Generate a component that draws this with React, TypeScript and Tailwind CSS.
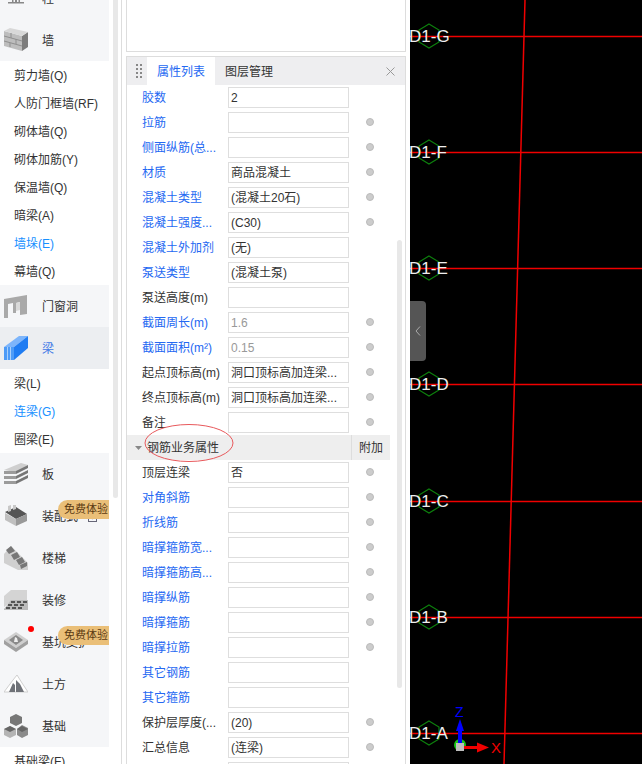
const font = { fontFamily: '"Liberation Sans", "Noto Sans CJK SC", sans-serif' };

type Prop = { label: string; value?: string; blue?: boolean; dot?: boolean; muted?: boolean };

const topProps: Prop[] = [
  { label: "胶数", value: "2", blue: true, dot: false },
  { label: "拉筋", blue: true },
  { label: "侧面纵筋(总...", blue: true },
  { label: "材质", value: "商品混凝土", blue: true },
  { label: "混凝土类型", value: "(混凝土20石)", blue: true },
  { label: "混凝土强度...", value: "(C30)", blue: true },
  { label: "混凝土外加剂", value: "(无)", blue: true, dot: false },
  { label: "泵送类型", value: "(混凝土泵)", blue: true, dot: false },
  { label: "泵送高度(m)", dot: false },
  { label: "截面周长(m)", value: "1.6", blue: true, muted: true },
  { label: "截面面积(m²)", value: "0.15", blue: true, muted: true },
  { label: "起点顶标高(m)", value: "洞口顶标高加连梁..." },
  { label: "终点顶标高(m)", value: "洞口顶标高加连梁..." },
  { label: "备注" },
];

const rebarProps: Prop[] = [
  { label: "顶层连梁", value: "否" },
  { label: "对角斜筋", blue: true },
  { label: "折线筋", blue: true },
  { label: "暗撑箍筋宽...", blue: true },
  { label: "暗撑箍筋高...", blue: true },
  { label: "暗撑纵筋", blue: true },
  { label: "暗撑箍筋", blue: true },
  { label: "暗撑拉筋", blue: true },
  { label: "其它钢筋", blue: true, dot: false },
  { label: "其它箍筋", blue: true, dot: false },
  { label: "保护层厚度(...", value: "(20)" },
  { label: "汇总信息", value: "(连梁)" },
  { label: "", dot: false },
];

const axes = [
  { name: "D1-G", y: 36 },
  { name: "D1-F", y: 152 },
  { name: "D1-E", y: 268 },
  { name: "D1-D", y: 384 },
  { name: "D1-C", y: 501 },
  { name: "D1-B", y: 617 },
  { name: "D1-A", y: 733 },
];

const WallIcon = () => (
  <svg width="24" height="24" viewBox="0 0 24 24">
    <path d="M0 3l18 5v15L0 18z" fill="#bdbdbd" />
    <path d="M18 8l6-4v15l-6 4z" fill="#7c7c7c" />
    <path d="M0 3l6-3 18 4-6 4z" fill="#d8d8d8" />
    <path d="M0 8l18 5M0 13l18 5M7 5v5M12 11v5M6 15v4" stroke="#8f8f8f" fill="none" />
  </svg>
);
const DoorIcon = () => (
  <svg width="24" height="24" viewBox="0 0 24 24">
    <path d="M0 5l23-4v19l-7 1V8l-4 1v10H9V9L4 10v14l-4 0z" fill="#a9a9a9" />
    <path d="M12 9l4-1v8l-4 1z" fill="#d9d9d9" />
  </svg>
);
const BeamIcon = () => (
  <svg width="24" height="24" viewBox="0 0 24 24">
    <path d="M0 11L15 0h9L10 11z" fill="#7db5fb" />
    <path d="M10 11L24 0v12L10 24z" fill="#1f7cf2" />
    <path d="M0 11h10v13H0z" fill="#4d9bf7" />
    <path d="M3.500 11v13M6.500 11v13" stroke="#a9d0fb" />
  </svg>
);
const SlabIcon = () => (
  <svg width="24" height="22" viewBox="0 0 24 22">
    <path d="M0 7L17 0l7 2L11 9z" fill="#cfcfcf" />
    <path d="M0 8h12v3H0zM0 13h12v3H0zM0 18h12v3H0z" fill="#9b9b9b" />
    <path d="M12 8l12-6v3L12 11zM12 13l12-6v3L12 16zM12 18l12-6v3L12 21z" fill="#777" />
  </svg>
);
const PrefabIcon = () => (
  <svg width="24" height="22" viewBox="0 0 24 22">
    <path d="M1 7l11-5 11 7-11 5z" fill="#555" />
    <path d="M1 8v7l11 6v-7z" fill="#c0c0c0" />
    <path d="M12 14v7l11-5V9z" fill="#999" />
    <path d="M4 1l3-1v6L4 7zM9 0l3-1v5L9 5z" fill="#c8c8c8" />
  </svg>
);
const StairIcon = () => (
  <svg width="24" height="24" viewBox="0 0 24 24">
    <path d="M0 8l7-8 17 17v7H14L0 17z" fill="#d0d0d0" />
    <path d="M2 4l5-4 4 5-6 3zM7 9l6-3 3 5-6 3zM12 14l6-3 3 5-6 3zM16 19l7-3v4l-6 3z" fill="#777" />
  </svg>
);
const FinishIcon = () => (
  <svg width="24" height="22" viewBox="0 0 24 22">
    <path d="M0 7l7-6h16v11H8L0 18z" fill="#d4d4d4" />
    <path d="M0 20l7-9h17v10H0z" fill="#bbb" />
    <path d="M7 12h4v2H7zM13 12h4v2h-4zM19 12h4v2h-4zM4 15h4v2H4zM10 15h4v2h-4zM16 15h4v2h-4zM2 18h4v2H2zM8 18h4v2H8zM14 18h4v2h-4z" fill="#555" />
  </svg>
);
const PitIcon = () => (
  <svg width="24" height="20" viewBox="0 0 24 20">
    <path d="M0 8l12-8 12 8-12 8z" fill="#cfcfcf" />
    <path d="M0 8v4l12 8v-4zM24 8v4l-12 8v-4z" fill="#a0a0a0" />
    <path d="M5 8l7-5 7 5-7 5z" fill="#8a8a8a" />
    <path d="M10 10l1-5 2 1 1 4z" fill="#eee" />
  </svg>
);
const EarthIcon = () => (
  <svg width="24" height="18" viewBox="0 0 24 18">
    <path d="M0 17L9 5l4-5 5 8 6 9z" fill="#fff" stroke="#cfcfcf" />
    <path d="M5 17l4-9 2 2v7zM12 17V5l4 4 4 8z" fill="#6f7278" />
  </svg>
);
const FoundationIcon = () => (
  <svg width="24" height="24" viewBox="0 0 24 24">
    <path d="M12 0l6 3v6l-6 3-6-3V3z" fill="#777" />
    <path d="M6 12l6 3v6l-6 3-6-3v-6z" fill="#b4b4b4" />
    <path d="M18 11l6 3v7l-6 3-5-3v-6z" fill="#8b8b8b" />
    <path d="M0 15l6 3 6-3-6-3zM13 15l5 3 6-3-6-3z" fill="#666" />
  </svg>
);
const ColumnIcon = () => (
  <svg width="16" height="12" viewBox="0 0 16 12">
    <path d="M3 0h10v2H3zM4 2h1.500v8H4zM7 2h2v8H7zM10.500 2H12v8h-1.500zM0 10h16v1.500H0z" fill="#888" />
  </svg>
);

const Badge = () => (
  <div className="absolute right-0 top-[5px] flex h-[19px] w-[51px] items-center justify-end whitespace-nowrap rounded-l-[10px] bg-[#eabf78] pr-[1px] text-[11px] text-[#5a3a12]">
    免费体验
  </div>
);

const Group = ({
  name,
  icon,
  active,
  badge,
  dot,
  lock,
}: {
  name: string;
  icon: React.ReactNode;
  active?: boolean;
  badge?: boolean;
  dot?: boolean;
  lock?: boolean;
}) => (
  <div className={`relative flex h-[42px] w-[109px] shrink-0 items-center ${active ? "bg-[#eceef1]" : "bg-[#f5f6f8]"}`}>
    <div className="flex w-[32px] shrink-0 justify-center">{icon}</div>
    <span className={`ml-[10px] whitespace-nowrap pt-[2px] text-[12px] ${active ? "text-[#3f78e6]" : "text-[#333]"}`}>{name}</span>
    {lock && (
      <svg className="ml-[10px] mt-[2px]" width="9" height="10" viewBox="0 0 9 10">
        <rect x="0.500" y="2.500" width="8" height="7" fill="none" stroke="#667" />
        <circle cx="4.500" cy="6" r="1.200" fill="#667" />
      </svg>
    )}
    {dot && <span className="absolute left-[28px] top-[5px] size-[6px] rounded-full bg-[#f00]" />}
    {badge && <Badge />}
  </div>
);

const Sub = ({ name, active }: { name: string; active?: boolean }) => (
  <div className={`flex h-[28px] w-[109px] shrink-0 items-center whitespace-nowrap pl-[14px] pt-[2px] text-[12px] ${active ? "text-[#1890ff]" : "text-[#333]"}`}>
    {name}
  </div>
);

const Row = ({ label, value, blue, dot = true, muted }: Prop) => (
  <div className="flex h-[25px] shrink-0 items-center">
    <span className={`w-[101px] shrink-0 whitespace-nowrap pl-[15px] text-[12px] ${blue ? "text-[#2468f2]" : "text-[#333]"}`}>
      {label}
    </span>
    <div className={`flex h-[21px] w-[121px] shrink-0 items-center overflow-hidden whitespace-nowrap border border-[#dedede] bg-white pl-[2px] text-[12px] ${muted ? "text-[#999]" : "text-[#333]"}`}>
      {value}
    </div>
    {dot && <span className="mb-[1px] ml-[17px] size-[8px] rounded-full border border-[#bbb] bg-[#ccc]" />}
  </div>
);

const Canvas = () => (
  <div className="relative h-full flex-1 overflow-hidden bg-black">
    <svg className="absolute inset-0" width="232" height="764">
      {axes.map((a) => (
        <line key={a.name} x1="0" y1={a.y + 0.5} x2="232" y2={a.y + 0.5} stroke="#f00000" strokeWidth="1.500" />
      ))}
      <line x1="115" y1="0" x2="94" y2="764" stroke="#f00000" strokeWidth="1.500" />
      {axes.map((a) => (
        <path
          key={a.name}
          d={`M19 ${a.y - 12}l10 6v12l-10 6-10-6v-12z`}
          fill="none"
          stroke="#0d800d"
          strokeWidth="1.200"
        />
      ))}
      <circle cx="50" cy="745" r="6" fill="#19c419" />
      <path d="M48 728h4v16h-4z" fill="#0000ff" />
      <path d="M50 719l-4 12h8z" fill="#0000ff" />
      <rect x="46" y="743" width="8" height="8" fill="#bdbdbd" />
      <path d="M54 746h14v3H54z" fill="#f00000" />
      <path d="M79 747.500l-12-5v10z" fill="#f00000" />
    </svg>
    {axes.map((a) => (
      <span
        key={a.name}
        className="absolute left-[-1px] -translate-y-1/2 whitespace-nowrap text-[17px] leading-none text-[#eee]"
        style={{ top: a.y }}
      >
        {a.name}
      </span>
    ))}
    <span className="absolute left-[45px] top-[705px] text-[14px] leading-none text-[#0000ff]">Z</span>
    <span className="absolute left-[81px] top-[740px] text-[15px] leading-none text-[#f00000]">X</span>
    <div className="absolute left-0 top-[301px] flex h-[60px] w-[16px] items-center justify-center rounded-r-[4px] bg-[#555]">
      <svg width="6" height="10" viewBox="0 0 6 10">
        <path d="M5 0.500L1 5l4 4.500" fill="none" stroke="#aaa" />
      </svg>
    </div>
  </div>
);

export default function App() {
  return (
    <div className="flex h-[764px] w-[642px] overflow-hidden bg-white" style={font}>
      {/* left tool tree */}
      <div className="relative h-full w-[122px] shrink-0 overflow-hidden border-r border-[#ddd]">
        <div className="-mt-[23px] flex flex-col">
          <Group name="柱" icon={<ColumnIcon />} />
          <Group name="墙" icon={<WallIcon />} />
          <Sub name="剪力墙(Q)" />
          <Sub name="人防门框墙(RF)" />
          <Sub name="砌体墙(Q)" />
          <Sub name="砌体加筋(Y)" />
          <Sub name="保温墙(Q)" />
          <Sub name="暗梁(A)" />
          <Sub name="墙垛(E)" active />
          <Sub name="幕墙(Q)" />
          <Group name="门窗洞" icon={<DoorIcon />} />
          <Group name="梁" icon={<BeamIcon />} active />
          <Sub name="梁(L)" />
          <Sub name="连梁(G)" active />
          <Sub name="圈梁(E)" />
          <Group name="板" icon={<SlabIcon />} />
          <Group name="装配式" icon={<PrefabIcon />} badge lock />
          <Group name="楼梯" icon={<StairIcon />} />
          <Group name="装修" icon={<FinishIcon />} />
          <Group name="基坑支护" icon={<PitIcon />} badge dot />
          <Group name="土方" icon={<EarthIcon />} />
          <Group name="基础" icon={<FoundationIcon />} />
          <Sub name="基础梁(F)" />
        </div>
        <div className="absolute left-[113px] top-0 h-[498px] w-[5px] rounded-b bg-[#e8e8e8]" />
      </div>

      {/* middle panels */}
      <div className="flex h-full w-[288px] shrink-0 flex-col bg-white pl-[4px] pr-[4px]">
        <div className="h-[52px] shrink-0 border border-t-0 border-[#ddd]" />
        <div className="mt-[4px] flex min-h-0 flex-1 flex-col border border-b-0 border-[#ddd]">
          <div className="flex h-[28px] shrink-0 items-center bg-[#eeeef0] text-[12px]">
            <svg className="ml-[9px]" width="6" height="14" viewBox="0 0 6 14">
              <path d="M0 0h2v2H0zM4 0h2v2H4zM0 4h2v2H0zM4 4h2v2H4zM0 8h2v2H0zM4 8h2v2H4zM0 12h2v2H0zM4 12h2v2H4z" fill="#888" />
            </svg>
            <div className="ml-[5px] flex h-full w-[68px] items-center justify-center bg-white pt-[2px] text-[#2468f2]">属性列表</div>
            <span className="ml-[10px] pt-[2px] text-[#333]">图层管理</span>
            <svg className="ml-auto mr-[10px]" width="9" height="9" viewBox="0 0 9 9">
              <path d="M0.500 0.500l8 8M8.500 0.500l-8 8" stroke="#999" />
            </svg>
          </div>
          <div className="relative flex min-h-0 flex-1 flex-col overflow-hidden">
            {topProps.map((p) => (
              <Row key={p.label} {...p} />
            ))}
            <div className="relative flex h-[25px] w-[263px] shrink-0 items-center bg-[#eee] text-[12px] text-[#333]">
              <svg className="ml-[8px]" width="7" height="4" viewBox="0 0 7 4">
                <path d="M0 0h7L3.500 4z" fill="#888" />
              </svg>
              <span className="ml-[5px]">钢筋业务属性</span>
              <span className="ml-auto flex h-full w-[39px] items-center justify-center border-l border-[#ddd]">附加</span>
              <svg className="absolute left-[17px] top-[-12px]" width="90" height="40" viewBox="0 0 90 40">
                <ellipse cx="45" cy="20" rx="44" ry="18.500" fill="none" stroke="#e8595c" />
              </svg>
            </div>
            {rebarProps.map((p, i) => (
              <Row key={i} {...p} />
            ))}
            <div className="absolute left-[270px] top-[155px] h-[448px] w-[5px] rounded bg-[#e8e8e8]" />
          </div>
        </div>
      </div>

      <Canvas />
    </div>
  );
}
